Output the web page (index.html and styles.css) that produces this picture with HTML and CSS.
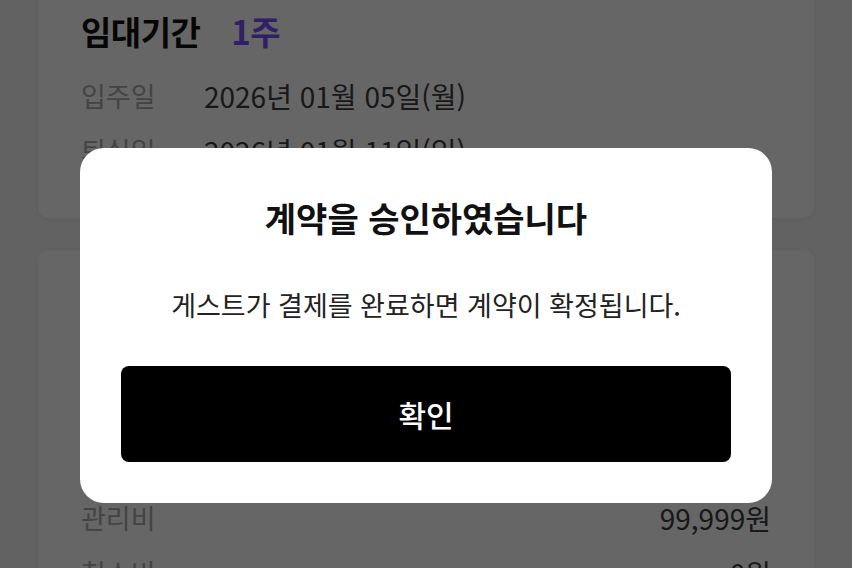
FILE: index.html
```html
<!DOCTYPE html>
<html lang="ko">
<head>
<meta charset="utf-8">
<title>계약 승인</title>
<link rel="stylesheet" href="styles.css">
</head>
<body>
<main class="page">
  <section class="card card-period">
    <h2 class="card-title">임대기간 <span class="accent">1주</span></h2>
    <div class="row"><span class="label">입주일</span><span class="value">2026년 01월 05일(월)</span></div>
    <div class="row"><span class="label">퇴실일</span><span class="value">2026년 01월 11일(일)</span></div>
  </section>
  <section class="card card-price">
    <h2 class="card-title">결제 금액</h2>
    <div class="row split"><span class="label">임대료</span><span class="value">999,999원</span></div>
    <div class="row split"><span class="label">보증금</span><span class="value">999,999원</span></div>
    <div class="row split"><span class="label">수수료</span><span class="value">9,999원</span></div>
    <div class="row split"><span class="label">관리비</span><span class="value">99,999원</span></div>
    <div class="row split"><span class="label">청소비</span><span class="value">0원</span></div>
  </section>
</main>
<div class="overlay">
  <div class="dialog">
    <h1 class="dialog-title">계약을 승인하였습니다</h1>
    <p class="dialog-text">게스트가 결제를 완료하면 계약이 확정됩니다.</p>
    <button class="dialog-btn" type="button">확인</button>
  </div>
</div>
</body>
</html>
```
FILE: styles.css
```css
* { box-sizing: border-box; }
html, body { margin: 0; padding: 0; }
body {
  background: #f5f5f5;
  font-family: "Noto Sans CJK KR", "Noto Sans", sans-serif;
  color: #333;
  overflow: hidden;
  height: 568px;
}
.page {
  padding: 0 38px;
  display: flex;
  flex-direction: column;
  gap: 32px;
}
.card {
  background: #fff;
  border-radius: 10px;
  box-shadow: 0 1px 4px rgba(0,0,0,0.08);
  padding: 0 43px;
}
.card-period {
  margin-top: -24px;
  padding-top: 31px;
  padding-bottom: 40px;
}
.card-price {
  padding-top: 20px;
  padding-bottom: 40px;
}
.card-title {
  margin: 0 0 13px;
  font-size: 33px;
  line-height: 48px;
  font-weight: 700;
  color: #111;
  letter-spacing: -0.5px;
}
.card-price .card-title { margin-bottom: 7px; }
.accent {
  color: #7a52ff;
  margin-left: 22px;
}
.row {
  display: flex;
  align-items: center;
  height: 55px;
}
.row .label {
  color: #aaa;
  width: 123px;
  flex-shrink: 0;
  font-size: 27px;
}
.row .value {
  color: #3c3c3c;
  font-size: 28px;
}
.row.split { justify-content: space-between; }
.row.split .label { width: auto; }

.overlay {
  position: fixed;
  inset: 0;
  background: rgba(0,0,0,0.6);
  display: flex;
  justify-content: center;
  align-items: flex-start;
  padding-top: 148px;
}
.dialog {
  width: 692px;
  background: #fff;
  border-radius: 24px;
  padding: 48px 41px 41px;
  display: flex;
  flex-direction: column;
  align-items: stretch;
  text-align: center;
}
.dialog-title {
  margin: 0;
  font-size: 34px;
  line-height: 44px;
  font-weight: 700;
  color: #111;
}
.dialog-text {
  margin: 47px 0 0;
  font-size: 27px;
  line-height: 36px;
  color: #222;
}
.dialog-btn {
  margin-top: 43px;
  height: 96px;
  border: 0;
  border-radius: 8px;
  background: #000;
  color: #fff;
  font-family: inherit;
  font-size: 30px;
  font-weight: 500;
}
```
